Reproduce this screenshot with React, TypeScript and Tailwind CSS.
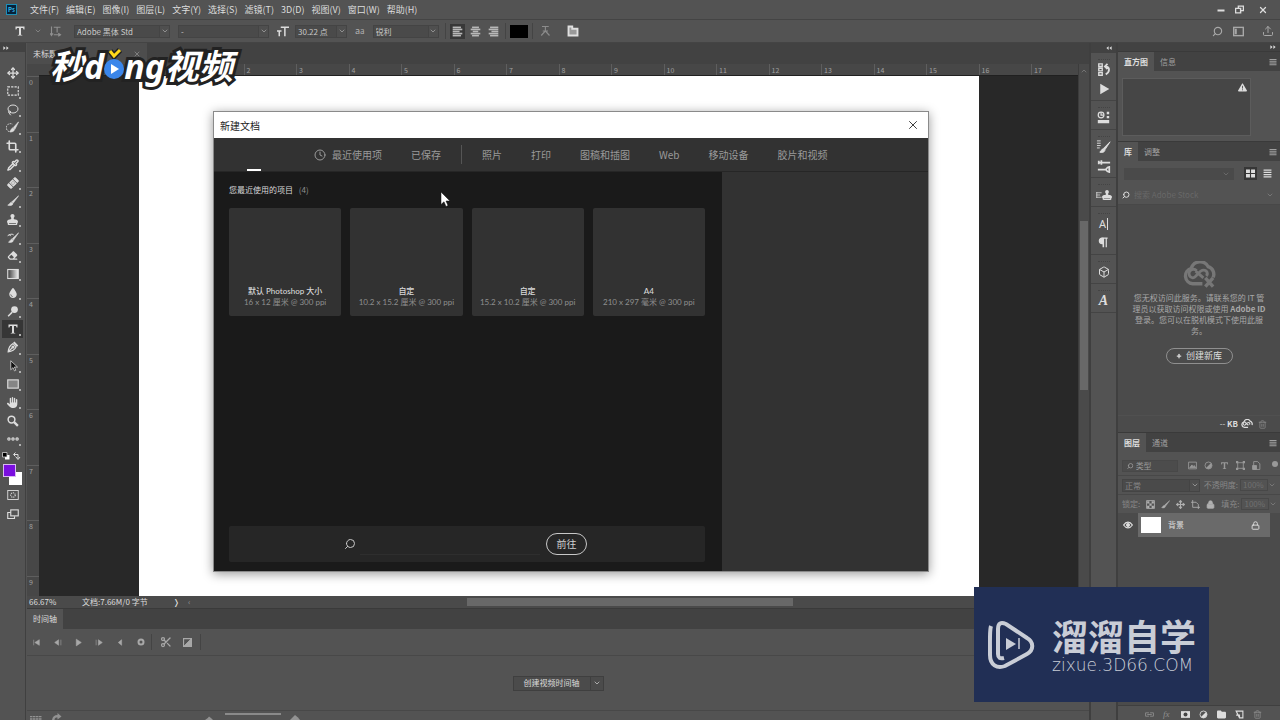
import { type ReactNode } from "react";
import {
  ChevronDown,
  ChevronUp,
  Clock,
  Crop,
  Ellipsis,
  Lasso,
  Lock,
  Move,
  Pipette,
  Plus,
  Scissors,
  Search,
  Box,
  Trash2,
  Upload,
  X,
} from "lucide-react";
import {
  FaBandage,
  FaDroplet,
  FaEraser,
  FaFolder,
  FaHand,
  FaStamp,
  FaTriangleExclamation,
} from "react-icons/fa6";

type IconProps = { className?: string };

function Svg({
  className = "size-3",
  children,
  viewBox = "0 0 16 16",
}: IconProps & { children: ReactNode; viewBox?: string }) {
  return (
    <svg viewBox={viewBox} className={className} fill="none" stroke="currentColor" strokeWidth="1.5" aria-hidden="true">
      {children}
    </svg>
  );
}

const SerifT = ({ className }: IconProps) => (
  <Svg className={className}>
    <path d="M2 2h12v4h-1.200l-.8-2H9.300v9l1.700.4V14H5v-.6L6.700 13V4H4l-.8 2H2z" fill="currentColor" stroke="none" />
  </Svg>
);

const Marquee = ({ className }: IconProps) => (
  <Svg className={className}>
    <rect x="1" y="2.500" width="14" height="11" strokeDasharray="3 1.500" />
  </Svg>
);

const QuickSelect = ({ className }: IconProps) => (
  <Svg className={className}>
    <path d="M7 13a5 5 0 1 1 1-9" strokeDasharray="2 1.200" strokeWidth="1.200" />
    <path d="M15.500 1 9 8l2 2zM8.500 8.500c-2 .3-2 2.500-4 4.500 2.500.8 5.500 0 6-2.500z" fill="currentColor" stroke="currentColor" strokeWidth=".8" />
  </Svg>
);

const Brush = ({ className }: IconProps) => (
  <Svg className={className}>
    <path
      d="M15.500 1 6.500 9l1.800 1.800zM6 9.500c-2.300.2-2.300 2.700-5 4 3 1.300 6.700.5 7-2.200z"
      fill="currentColor"
      strokeWidth=".8"
    />
  </Svg>
);

const HistoryBrush = ({ className }: IconProps) => (
  <Svg className={className}>
    <path
      d="M15.500 1 7 9l1.800 1.800zM6.500 9.500c-2 .2-2 2.500-4.500 4 3 1 6.200.2 6.500-2.200z"
      fill="currentColor"
      strokeWidth=".8"
    />
    <path d="M1 5.500 3 3l2 2.500M3 4c3-2 5-1 6 0" strokeWidth="1.300" />
  </Svg>
);

const Gradient = ({ className }: IconProps) => (
  <Svg className={className}>
    <defs>
      <linearGradient id="toolGradient">
        <stop offset="0" stopColor="#3a3a3a" />
        <stop offset="1" stopColor="#efefef" />
      </linearGradient>
    </defs>
    <rect x="1" y="2" width="14" height="12" fill="url(#toolGradient)" />
  </Svg>
);

const Dodge = ({ className }: IconProps) => (
  <Svg className={className}>
    <circle cx="10" cy="6" r="4.500" fill="currentColor" stroke="none" />
    <path d="M7 9.500 1.500 15" strokeWidth="2" />
  </Svg>
);

const Pen = ({ className }: IconProps) => (
  <Svg className={className}>
    <path d="M1.500 14.500C2 10 3 6 8 3.500l4 4.500c-2 4.500-6 6-10.500 6.500zM2 14l5-5" />
    <circle cx="8" cy="8" r="1.300" fill="currentColor" />
    <path d="m9 1.500 5 5.500" strokeWidth="2.500" />
  </Svg>
);

const PathArrow = ({ className }: IconProps) => (
  <Svg className={className}>
    <path d="M5 1v12l3-2.800 2 4.300 1.800-.9-2-4.200H14z" fill="#111" strokeWidth="1" />
  </Svg>
);

const RectShape = ({ className }: IconProps) => (
  <Svg className={className}>
    <rect x="1" y="2.500" width="14" height="11" fill="#858585" />
  </Svg>
);

const ZoomTool = ({ className }: IconProps) => (
  <Svg className={className}>
    <circle cx="6" cy="6" r="4.500" strokeWidth="2" />
    <path d="m9.500 9.500 5 5" strokeWidth="3" />
  </Svg>
);

const QuickMask = ({ className }: IconProps) => (
  <Svg className={className}>
    <rect x="1" y="2" width="14" height="12" strokeWidth="1.200" />
    <circle cx="8" cy="8" r="3" strokeDasharray="1.500 1" />
  </Svg>
);

const ScreenMode = ({ className }: IconProps) => (
  <Svg className={className}>
    <path d="M5 6H1v8h9v-3" />
    <rect x="5" y="2.500" width="10" height="8" />
  </Svg>
);

const AlignIcon = ({ rows }: { rows: [number, number][] }) => (
  <Svg className="size-[11px] text-[#b8b8b8]">
    {rows.map(([x, w], i) => (
      <path key={i} d={`M${x} ${2 + i * 3}h${w}`} strokeWidth="2.400" />
    ))}
  </Svg>
);

const HalfCircle = ({ className }: IconProps) => (
  <Svg className={className}>
    <circle cx="8" cy="8" r="6.200" />
    <path d="M12.500 3.500a6.400 6.400 0 0 1-9 9z" fill="currentColor" stroke="none" />
  </Svg>
);

const CloudIcon = ({ className, crossed }: IconProps & { crossed?: boolean }) => (
  <Svg className={className} viewBox="0 0 34 27">
    <path d="M20 23H10a8 8 0 0 1-1.500-15.700A9.500 9.500 0 0 1 26 5.500a8 8 0 0 1 5 11" strokeWidth="3.500" />
    <path d="M14 9.500a4.500 4.500 0 1 0-4 7.500c4 0 6-8 11-8 4 0 5 4 3 6M13 10l8 7" strokeWidth="3" />
    {crossed && <path d="m23 17 8 9m0-9-8 9" strokeWidth="3.500" />}
  </Svg>
);

const Burger = () => (
  <Svg className="size-2">
    <path d="M1 3h14M1 6.500h14M1 10h14M1 13.500h14" strokeWidth="2" />
  </Svg>
);

const DoubleArrow = ({ left }: { left?: boolean }) => (
  <Svg className={left ? "size-[6px] rotate-180" : "size-[6px]"}>
    <path d="M1 3v10l6-5zM9 3v10l6-5z" fill="currentColor" stroke="none" />
  </Svg>
);

const menus = ["文件(F)", "编辑(E)", "图像(I)", "图层(L)", "文字(Y)", "选择(S)", "滤镜(T)", "3D(D)", "视图(V)", "窗口(W)", "帮助(H)"];

const tools: { name: string; icon: ReactNode; plain?: boolean; active?: boolean }[] = [
  { name: "移动工具", icon: <Move className="size-3" strokeWidth={2.500} />, plain: true },
  { name: "矩形选框工具", icon: <Marquee className="size-3" /> },
  { name: "套索工具", icon: <Lasso className="size-3" /> },
  { name: "快速选择工具", icon: <QuickSelect className="size-[13px]" /> },
  { name: "裁剪工具", icon: <Crop className="size-[13px]" strokeWidth={3} /> },
  { name: "吸管工具", icon: <Pipette className="size-3" strokeWidth={3} /> },
  { name: "修复画笔工具", icon: <FaBandage className="size-3 -rotate-45" /> },
  { name: "画笔工具", icon: <Brush className="size-3" /> },
  { name: "仿制图章工具", icon: <FaStamp className="size-[11px]" /> },
  { name: "历史记录画笔工具", icon: <HistoryBrush className="size-3" /> },
  { name: "橡皮擦工具", icon: <FaEraser className="size-[11px]" /> },
  { name: "渐变工具", icon: <Gradient className="size-3" /> },
  { name: "模糊工具", icon: <FaDroplet className="size-[10px]" /> },
  { name: "减淡工具", icon: <Dodge className="size-3" /> },
  { name: "文字工具", icon: <SerifT className="size-3" />, active: true },
  { name: "钢笔工具", icon: <Pen className="size-3" /> },
  { name: "路径选择工具", icon: <PathArrow className="size-3" /> },
  { name: "矩形工具", icon: <RectShape className="size-3" /> },
  { name: "抓手工具", icon: <FaHand className="size-[11px]" /> },
  { name: "缩放工具", icon: <ZoomTool className="size-3" />, plain: true },
  { name: "编辑工具栏", icon: <Ellipsis className="size-[14px]" strokeWidth={4} /> },
];

function MenuBar() {
  return (
    <header className="flex h-5 shrink-0 items-center border-b border-[#444444] bg-[#535353]">
      <div className="ml-1.5 flex size-[11px] items-center justify-center border border-[#1c8fb8] bg-[#06223a] text-[6px] font-bold text-[#35b8e8]">
        Ps
      </div>
      <nav className="ml-[13px] flex flex-1 gap-[7px] text-[9px] leading-4">
        {menus.map((menu) => (
          <button key={menu}>{menu}</button>
        ))}
      </nav>
      <div className="flex items-center gap-2.5 pr-3">
        <button aria-label="最小化">
          <Svg className="size-2">
            <path d="M1 9h14" strokeWidth="4" />
          </Svg>
        </button>
        <button aria-label="还原">
          <Svg className="size-[9px]">
            <path d="M6 5V2h9v8h-4M1 6h9v8H1z" strokeWidth="2.500" />
          </Svg>
        </button>
        <button aria-label="关闭" className="ml-1">
          <X className="size-[10px]" strokeWidth={3} />
        </button>
      </div>
    </header>
  );
}

function Select({ label, value, className }: { label: string; value: string; className: string }) {
  return (
    <label className={`relative flex h-[13px] items-center border border-[#444444] bg-[#4a4a4a] ${className}`}>
      <span className="sr-only">{label}</span>
      <select className="h-full w-full appearance-none pl-0.5 text-[8px] leading-[11px] outline-none">
        <option>{value}</option>
      </select>
      <span className="pointer-events-none absolute inset-y-0 right-0 flex w-2.5 items-center justify-center border-l border-[#444444] bg-[#4f4f4f]">
        <ChevronDown className="size-2 text-[#b0b0b0]" />
      </span>
    </label>
  );
}

const Divider = () => <span className="h-4 w-px bg-[#444444]" />;

function OptionsBar() {
  return (
    <div className="flex h-[23px] shrink-0 items-center border-b border-[#444444] bg-[#535353] px-1.5 text-[#c8c8c8]">
      <SerifT className="ml-2 size-3 text-[#e0e0e0]" />
      <ChevronDown className="ml-2 size-2 text-[#999999]" />
      <Svg className="ml-2 size-3 text-[#909090]">
        <path d="M5 3h9M9.500 3v7M2 2v11M0 11l2 3 2-3M5 13h8M11 11l3 2-3 2" />
      </Svg>
      <Select label="字体" value="Adobe 黑体 Std" className="ml-3 w-24" />
      <Select label="字形" value="-" className="ml-2 w-[91px]" />
      <Svg className="ml-2 size-3 text-[#dddddd]">
        <path d="M5 3h11M10.500 3v12M0 8h6M3 8v7" strokeWidth="2" />
      </Svg>
      <Select label="字号" value="30.22 点" className="ml-1.5 w-[52px]" />
      <span className="ml-2 text-[9px] leading-3 text-[#b0b0b0]">
        a<span className="text-[8px]">a</span>
      </span>
      <Select label="消除锯齿" value="锐利" className="ml-2 w-[66px]" />
      <div className="ml-1.5 flex items-center gap-1">
        <Divider />
        <button aria-label="左对齐" className="flex h-[15px] w-[15px] items-center justify-center bg-[#383838]">
          <AlignIcon rows={[[1, 12], [1, 14], [1, 10], [1, 14], [1, 12]]} />
        </button>
        <button aria-label="居中对齐" className="flex w-3.5 justify-center">
          <AlignIcon rows={[[3, 10], [1, 14], [4, 8], [1, 14], [3, 10]]} />
        </button>
        <button aria-label="右对齐" className="flex w-3.5 justify-center">
          <AlignIcon rows={[[3, 12], [1, 14], [5, 10], [1, 14], [3, 12]]} />
        </button>
        <Divider />
        <button aria-label="文本颜色" className="h-[13px] w-[18px] bg-black" />
        <Divider />
      </div>
      <Svg className="ml-1.5 size-3 text-[#8c8c8c]">
        <path d="M4 2h9M8.500 2v6L3 14M8.500 8 14 14M5 8h7" />
      </Svg>
      <span className="mr-2 ml-2">
        <Divider />
      </span>
      <Svg className="size-3 text-[#e0e0e0]">
        <path d="M2 2h5v3h7v9H2z" fill="#999999" strokeWidth="2.500" />
      </Svg>
      <span className="ml-1.5">
        <Divider />
      </span>
      <div className="ml-auto flex items-center gap-2.5 text-[#a8a8a8]">
        <Search className="size-[11px] -scale-x-100" strokeWidth={2.500} />
        <Svg className="size-[11px]">
          <rect x="1" y="2" width="14" height="12" strokeWidth="2" />
          <path d="M4 4v8" strokeWidth="3" />
        </Svg>
        <Upload className="ml-2 size-3" />
      </div>
    </div>
  );
}

function ToolBar() {
  return (
    <aside className="flex w-[26px] shrink-0 flex-col border-r border-[#404040] bg-[#535353]">
      <div className="flex h-[9px] items-center bg-[#424242] pl-[3px]">
        <DoubleArrow />
      </div>
      <div className="mt-3 grid h-[384px] auto-rows-fr pr-0.5 pl-0.5">
        {tools.map((tool) => (
          <button
            key={tool.name}
            aria-label={tool.name}
            className={`relative flex items-center justify-center ${tool.active ? "bg-[#363636]" : ""}`}
          >
            {tool.icon}
            {!tool.plain && <span className="absolute right-0.5 bottom-0.5 size-0.5 bg-[#b0b0b0]" />}
          </button>
        ))}
      </div>
      <div className="mt-1 flex items-center justify-between px-0.5">
        <Svg className="size-2">
          <path d="M6 6h9v9H6z" fill="#fff" stroke="none" />
          <path d="M1 1h9v9H1z" fill="#000" />
        </Svg>
        <Svg className="mr-0.5 size-2">
          <path d="M2 5h8v8M5 1 1 5l4 4M6 10l4 5 4-5" strokeWidth="2" />
        </Svg>
      </div>
      <div className="relative mx-[3px] mt-1 h-[21px]">
        <button aria-label="背景色" className="absolute right-0 bottom-0 size-[13px] bg-white" />
        <button aria-label="前景色" className="absolute top-0 left-0 size-[13px] border border-[#d8b8f0] bg-[#7a0ee0]" />
      </div>
      <div className="mt-1 flex flex-col items-center gap-[7px]">
        <QuickMask className="size-3" />
        <ScreenMode className="size-3" />
      </div>
    </aside>
  );
}

const columnMarks = Array.from({ length: 20 }, (_, i) => i - 2);
const rowMarks = Array.from({ length: 10 }, (_, i) => i);

const presets = [
  { title: "默认 Photoshop 大小", size: "16 x 12 厘米 @ 300 ppi" },
  { title: "自定", size: "10.2 x 15.2 厘米 @ 300 ppi" },
  { title: "自定", size: "15.2 x 10.2 厘米 @ 300 ppi" },
  { title: "A4", size: "210 x 297 毫米 @ 300 ppi" },
];

function NewDocumentDialog() {
  return (
    <div
      role="dialog"
      aria-label="新建文档"
      className="absolute top-[35px] left-[174px] flex h-[461px] w-[716px] flex-col border border-[#8a8a8a] bg-[#1a1a1a] shadow-[0_2px_10px_rgba(0,0,0,0.4)]"
    >
      <div className="flex h-[26px] shrink-0 items-center justify-between bg-white pr-2 pl-1.5 text-[10px] text-[#222222]">
        <span>新建文档</span>
        <button aria-label="关闭">
          <X className="size-3.5" strokeWidth={1.500} />
        </button>
      </div>
      <div className="flex h-[34px] shrink-0 items-stretch border-b border-[#262626] bg-[#323232] text-[10px] text-[#9a9a9a]">
        <span className="ml-[33px] w-3.5 border-b-2 border-white" />
        <div className="ml-[53px] flex items-center gap-[29px]">
          <button className="flex items-center gap-1.5">
            <Clock className="size-3" />
            最近使用项
          </button>
          <button>已保存</button>
        </div>
        <span className="mx-5 my-[7px] w-px bg-[#555555]" />
        <div className="flex items-center gap-[29px]">
          {["照片", "打印", "图稿和插图", "Web", "移动设备", "胶片和视频"].map((tab) => (
            <button key={tab}>{tab}</button>
          ))}
        </div>
      </div>
      <div className="flex min-h-0 flex-1">
        <div className="flex flex-1 flex-col pr-[17px] pb-[9px] pl-[15px]">
          <p className="mt-3 text-[8px] leading-3 text-[#d8d8d8]">
            您最近使用的项目 <span className="ml-1 text-[#909090]">(4)</span>
          </p>
          <div className="mt-3 grid grid-cols-4 gap-[9px]">
            {presets.map((preset) => (
              <button
                key={preset.size}
                className="flex h-[108px] flex-col items-center justify-end rounded-xs bg-[#323232] pb-2 font-['Lato','Noto_Sans_CJK_SC',sans-serif] whitespace-nowrap"
              >
                <span className="text-[8px] leading-[11px] font-medium text-[#d8d8d8]">{preset.title}</span>
                <span className="text-[8px] leading-[11px] text-[#8f8f8f]">{preset.size}</span>
              </button>
            ))}
          </div>
          <div className="mt-auto flex h-9 items-center rounded-xs bg-[#262626]">
            <Search className="ml-[115px] size-3 -scale-x-100 text-[#c8c8c8]" />
            <input aria-label="搜索模板" className="ml-1 h-[22px] w-[180px] border-b border-[#2e2e2e] text-[10px] outline-none" />
            <button className="ml-1.5 h-[22px] w-[41px] rounded-full border border-[#c8c8c8] text-[10px] leading-5 text-[#d0d0d0]">
              前往
            </button>
          </div>
        </div>
        <div className="w-[206px] bg-[#323232]" />
      </div>
      <Svg className="absolute top-20 left-[226px] h-[15px] w-[10px]" viewBox="0 0 10 15">
        <path d="M1 0v12.500l3-2.700 2 4.700 2-1-2-4.500h4z" fill="#fff" stroke="#111" strokeWidth=".5" />
      </Svg>
    </div>
  );
}

function Ruler() {
  return (
    <div className="flex h-3 shrink-0 justify-center overflow-hidden border-b border-[#202020] bg-[#474747]">
      <div className="grid w-[1050px] shrink-0 grid-cols-20">
        {columnMarks.map((mark) => (
          <span key={mark} className="flex items-end border-l border-[#5e5e5e] pl-0.5 text-[7px] leading-[10px] text-[#a0a0a0]">
            {mark > 1 && mark}
          </span>
        ))}
      </div>
    </div>
  );
}

function Workspace() {
  return (
    <section className="flex min-h-0 flex-1 flex-col">
      <div className="flex h-[21px] shrink-0 bg-[#424242] text-[8px]">
        <div className="flex w-[120px] items-center justify-between bg-[#4d4d4d] px-1.5">
          <span>未标题</span>
          <X className="size-2 text-[#999999]" />
        </div>
      </div>
      <div className="flex min-h-0 flex-1">
        <div className="flex w-3 shrink-0 flex-col overflow-hidden bg-[#474747]">
          <div className="h-3 shrink-0" />
          <div className="grid h-[555px] shrink-0 grid-rows-10">
            {rowMarks.map((mark) => (
              <span key={mark} className="border-t border-[#5e5e5e] pl-0.5 text-[7px] leading-[10px] text-[#a0a0a0]">
                {mark}
              </span>
            ))}
          </div>
        </div>
        <div className="flex min-w-0 flex-1 flex-col">
          <Ruler />
          <div className="relative flex min-h-0 flex-1 justify-center bg-[#282828]">
            <div className="w-[840px] shrink-0 bg-white" />
            <NewDocumentDialog />
          </div>
        </div>
        <div className="flex w-[11px] shrink-0 flex-col items-center border-l border-[#3c3c3c] bg-[#4a4a4a]">
          <ChevronUp className="mt-[3px] size-2 text-[#888888]" />
          <div className="mt-[146px] h-[169px] w-2 bg-[#686868]" />
        </div>
      </div>
      <div className="flex h-3 shrink-0 items-center bg-[#4a4a4a] text-[8px] leading-3">
        <span className="w-[55px] pl-0.5">66.67%</span>
        <span className="w-[91px]">文档:7.66M/0 字节</span>
        <span>❭</span>
        <span className="ml-2 text-[#999999]">‹</span>
        <div className="flex flex-1 justify-center pr-5">
          <div className="h-2 w-[326px] bg-[#686868]" />
        </div>
      </div>
    </section>
  );
}

function Tabs({ items }: { items: string[] }) {
  return (
    <div className="flex h-5 shrink-0 items-stretch border-t border-[#3a3a3a] bg-[#424242] text-[8px]">
      {items.map((item, i) => (
        <button key={item} className={i === 0 ? "bg-[#535353] px-1.5 font-bold" : "px-1.5 text-[#a0a0a0]"}>
          {item}
        </button>
      ))}
      <button aria-label="面板菜单" className="mr-[3px] ml-auto text-[#a0a0a0]">
        <Burger />
      </button>
    </div>
  );
}

function Timeline() {
  const controls: [string, string][] = [
    ["转到第一帧", "M3 3v10M13 3v10L5 8z"],
    ["上一帧", "M10 3v10L3 8zM14 3v10"],
    ["播放", "M4 2v12l9-6z"],
    ["下一帧", "M2 3v10M6 3v10l7-5z"],
    ["静音", "M10 3v10L4 8z"],
  ];
  return (
    <section className="flex h-28 shrink-0 flex-col border-t border-[#3a3a3a] bg-[#535353]">
      <div className="flex h-5 shrink-0 bg-[#424242] text-[8px]">
        <button className="bg-[#535353] px-1.5">时间轴</button>
      </div>
      <div className="flex h-[27px] shrink-0 items-center border-b border-[#484848] pl-[5px] text-[#a8a8a8]">
        <div className="flex gap-3">
          {controls.map(([name, d]) => (
            <button key={name} aria-label={name}>
              <Svg className="size-[9px]">
                <path d={d} fill="currentColor" strokeWidth="1" />
              </Svg>
            </button>
          ))}
        </div>
        <Svg className="mr-1.5 ml-3 size-2">
          <circle cx="8" cy="8" r="5" strokeWidth="4" />
        </Svg>
        <Divider />
        <Scissors className="ml-2 size-3" strokeWidth={2.500} />
        <Svg className="mr-2 ml-[11px] size-[9px]">
          <path d="M1 1h14v14H1z" strokeWidth="2" />
          <path d="M15 1v14H1z" fill="currentColor" />
        </Svg>
        <Divider />
      </div>
      <div className="flex min-h-0 flex-1 items-center justify-center">
        <div className="flex h-[15px] items-stretch border border-[#3f3f3f] bg-[#4b4b4b] text-[8px] leading-3">
          <button className="w-[77px] border-r border-[#3f3f3f]">创建视频时间轴</button>
          <button aria-label="时间轴类型" className="flex w-3 items-center justify-center">
            <ChevronDown className="size-2" />
          </button>
        </div>
      </div>
      <div className="flex h-2.5 shrink-0 items-end overflow-hidden border-t border-[#484848] text-[#929292]">
        <Svg className="ml-[3px] h-1 w-3" viewBox="0 0 24 8">
          <path d="M0 1h24M0 6h24" strokeWidth="3" strokeDasharray="5 1" />
        </Svg>
        <Svg className="ml-2.5 h-[7px] w-2.5" viewBox="0 0 20 14">
          <path d="M0 14C1 7 5 4 11 4V0l8 7-8 6V9C7 9 5 10 5 14z" fill="currentColor" stroke="none" />
        </Svg>
        <Svg className="ml-[143px] h-1 w-2" viewBox="0 0 20 10">
          <path d="m0 10 7-5 3-4 5 4 5 5z" fill="currentColor" stroke="none" />
        </Svg>
        <span className="mb-[5px] ml-3 h-0.5 w-14 bg-[#8a8a8a]" />
        <Svg className="ml-2 h-[5px] w-3" viewBox="0 0 20 10">
          <path d="m0 10 5-5 5-5 6 5 4 5z" fill="currentColor" stroke="none" />
        </Svg>
      </div>
    </section>
  );
}

const dockGroups: ReactNode[][] = [
  [
    <Svg className="size-[14px]">
      <path d="M2 1h4v3H2zM2 6h4v3H2zM2 11h4v3H2z" />
      <path d="M10 4c5 0 5 6 0 9M12 1 9 4l3 3" strokeWidth="2" />
    </Svg>,
    <Svg className="size-3">
      <path d="M3 1v14l12-7z" fill="currentColor" stroke="none" />
    </Svg>,
  ],
  [
    <Svg className="size-[13px]">
      <circle cx="5" cy="5" r="3.500" />
      <path d="M5 2v3h3" />
      <path d="M12 1h3v3h-3zM12 6h3v3h-3zM1 11h14v4H1z" fill="currentColor" stroke="none" />
    </Svg>,
  ],
  [
    <Svg className="size-[15px]">
      <path d="M15 3 8 10l1.500 1.500zM8 10.500c-2 0-2 2-4 3.500 2 .8 5 .5 5.500-2z" fill="currentColor" strokeWidth="1" />
      <path d="M1 2h4M1 4.500h4M1 7h4M1 9.500h3" strokeWidth="1" />
    </Svg>,
    <Svg className="size-[14px]">
      <path d="M6 4h9M1 4h5M1 12h9M2 2v4M5 1.500v5M10 12c2-3 4-3 4-3v6s-2 0-4-3" strokeWidth="2" />
    </Svg>,
  ],
  [
    <span className="flex items-center">
      <Svg className="size-[6px]">
        <path d="M1 2h14M1 8h10M1 14h14M2 0v16" strokeWidth="2" />
      </Svg>
      <FaStamp className="size-2.5" />
    </span>,
  ],
  [
    <span className="border-r border-[#dddddd] pr-px font-['Noto_Sans',sans-serif] text-[11px] leading-3">A</span>,
    <Svg className="size-[11px]">
      <path d="M9 1.500H6a4 4 0 0 0 0 8h1.500V15M8 2v13M12 2v13M6 1.500h8" fill="none" strokeWidth="1.800" />
      <path d="M8 1H6a4 4 0 0 0 0 8h2z" fill="currentColor" stroke="none" />
    </Svg>,
  ],
  [<Box className="size-3" />],
  [<span className="font-['Liberation_Serif',serif] text-[14px] leading-3 font-bold italic">A</span>],
];

function IconDock() {
  return (
    <aside className="flex w-[29px] shrink-0 flex-col border-x-2 border-[#3f3f3f] bg-[#535353]">
      <div className="flex h-2.5 shrink-0 items-center justify-end bg-[#424242] pr-1">
        <DoubleArrow left />
      </div>
      {dockGroups.map((icons, i) => (
        <div key={i} className="border-b border-[#444444] pb-0.5">
          <div className="mx-auto h-[7px] w-3 border-b border-dotted border-[#444444]" />
          {icons.map((icon, j) => (
            <button key={j} className="flex h-[19px] w-full items-center justify-center">
              {icon}
            </button>
          ))}
        </div>
      ))}
    </aside>
  );
}

function LibraryPanel() {
  return (
    <section className="flex h-[291px] shrink-0 flex-col">
      <Tabs items={["库", "调整"]} />
      <div className="flex h-[25px] items-center gap-1.5 pr-2 pl-1.5">
        <label className="relative flex flex-1 items-center">
          <span className="sr-only">库列表</span>
          <select className="h-3 w-full appearance-none bg-[#4a4a4a]" />
          <ChevronDown className="pointer-events-none absolute right-1 size-2 text-[#777777]" />
        </label>
        <button aria-label="网格视图" className="ml-1 flex size-[13px] items-center justify-center bg-[#363636]">
          <Svg className="size-[9px]">
            <path d="M0 1h7v6H0zM9 1h7v6H9zM0 9h7v6H0zM9 9h7v6H9z" fill="currentColor" stroke="none" />
          </Svg>
        </button>
        <button aria-label="列表视图">
          <Svg className="size-[9px]">
            <path d="M1 2h14M1 6h14M1 10h14M1 14h14" strokeWidth="2.500" />
          </Svg>
        </button>
      </div>
      <label className="flex h-[19px] items-center border-b border-[#484848] pr-1.5 pl-1">
        <Search className="size-2 -scale-x-100" strokeWidth={3} />
        <span className="sr-only">搜索</span>
        <input
          placeholder="搜索 Adobe Stock"
          className="ml-1 min-w-0 flex-1 text-[8px] outline-none placeholder:text-[#686868]"
        />
        <ChevronDown className="size-2 text-[#888888]" />
      </label>
      <div className="flex flex-1 flex-col items-center bg-[#4b4b4b] px-3.5 pt-14 text-center">
        <CloudIcon className="h-[27px] w-[33px] text-[#777777]" crossed />
        <p className="mt-1 text-[8px] leading-[11px] text-[#a8a8a8]">
          您无权访问此服务。请联系您的 IT 管理员以获取访问权限或使用 <b>Adobe ID</b> 登录。您可以在脱机模式下使用此服务。
        </p>
        <button className="mt-3 flex h-4 w-[67px] items-center justify-center gap-1 rounded-full border border-[#8f8f8f] text-[9px] leading-3">
          <Plus className="size-1.5" strokeWidth={5} />
          创建新库
        </button>
      </div>
      <div className="flex h-[17px] items-center justify-end gap-[3px] border-t border-[#505050] bg-[#4b4b4b] pr-[13px] text-[8px]">
        <span>
          -- <b>KB</b>
        </span>
        <CloudIcon className="h-2.5 w-3" />
        <Trash2 className="ml-0.5 size-[9px] text-[#888888]" />
      </div>
    </section>
  );
}

function LayersPanel() {
  return (
    <section className="flex min-h-0 flex-1 flex-col text-[8px]">
      <Tabs items={["图层", "通道"]} />
      <div className="flex h-6 items-center border-b border-[#484848] px-1 pt-1 text-[#999999]">
        <label className="flex h-3 w-14 items-center border border-[#484848] bg-[#4c4c4c] pl-1">
          <Search className="size-2 -scale-x-100" strokeWidth={3} />
          <span className="sr-only">筛选图层</span>
          <select className="ml-0.5 h-full w-full appearance-none leading-[10px]">
            <option>类型</option>
          </select>
        </label>
        <div className="ml-auto flex items-center gap-[7px]">
          <Svg className="size-[9px]">
            <path d="M1 2h14v12H1z" />
            <path d="m3 12 4-5 2 3 2-2 3 4z" fill="currentColor" />
          </Svg>
          <HalfCircle className="size-[9px]" />
          <SerifT className="size-[9px]" />
          <Svg className="size-[9px]">
            <path d="M3 3h10v10H3z" />
            <path d="M0 0h4v4H0zM12 0h4v4h-4zM0 12h4v4H0zM12 12h4v4h-4z" fill="currentColor" stroke="none" />
          </Svg>
          <Svg className="size-[9px]">
            <path d="M3 15V1h7l4 4v10z" />
            <path d="M1 8h7v7H1z" fill="currentColor" />
          </Svg>
          <span className="-mr-0.5 mb-1 ml-1 size-1.5 rounded-full bg-[#999999]" />
        </div>
      </div>
      <div className="flex h-[18px] items-center px-1 text-[#888888]">
        <Select label="混合模式" value="正常" className="w-[78px]" />
        <label htmlFor="opacity" className="ml-auto whitespace-nowrap">
          不透明度:
        </label>
        <input id="opacity" defaultValue="100%" className="ml-0.5 h-3 w-7 border border-[#484848] px-0.5 text-[#707070]" />
        <ChevronDown className="size-2" />
      </div>
      <div className="flex h-[19px] items-center gap-1.5 border-t border-[#484848] px-1 text-[#888888]">
        <span className="whitespace-nowrap">锁定:</span>
        <Svg className="size-[9px] shrink-0 text-[#b0b0b0]">
          <path d="M1 1h14v14H1z" />
          <path d="M2 2h4v4H2zM10 2h4v4h-4zM6 6h4v4H6zM2 10h4v4H2zM10 10h4v4h-4z" fill="currentColor" stroke="none" />
        </Svg>
        <Brush className="size-[9px] shrink-0 text-[#b0b0b0]" />
        <Move className="size-[9px] shrink-0 text-[#b0b0b0]" strokeWidth={3} />
        <Svg className="size-[9px] shrink-0 text-[#b0b0b0]">
          <path d="M3 0v13h13M0 4h9l4 4v8" />
        </Svg>
        <Lock className="size-[9px] shrink-0 text-[#b0b0b0]" fill="currentColor" />
        <div className="ml-auto flex items-center">
          <label htmlFor="fill" className="whitespace-nowrap">
            填充:
          </label>
          <input id="fill" defaultValue="100%" className="ml-0.5 h-3 w-7 border border-[#484848] px-0.5 text-[#707070]" />
          <ChevronDown className="size-2" />
        </div>
      </div>
      <div className="flex min-h-0 flex-1 flex-col bg-[#4b4b4b]">
        <div className="flex h-6 items-center pr-2.5">
          <Svg className="mx-[5px] size-2.5">
            <path d="M1 8c4-6 10-6 14 0-4 6-10 6-14 0z" strokeWidth="2" />
            <circle cx="8" cy="8" r="2.500" fill="currentColor" />
          </Svg>
          <button className="flex h-full flex-1 items-center bg-[#6a6a6a] pr-2.5 pl-[3px]">
            <span className="h-4 w-5 bg-white" />
            <span className="ml-[7px]">背景</span>
            <Lock className="ml-auto size-[9px]" strokeWidth={2.500} />
          </button>
        </div>
      </div>
      <div className="flex h-[15px] shrink-0 items-center gap-[9px] border-t border-[#3f3f3f] pt-0.5 pl-[27px] text-[#dddddd]">
        <Svg className="size-[9px] text-[#909090]">
          <path d="M7 5H1v6h6M9 5h6v6H9M4 8h8" />
        </Svg>
        <i className="w-[9px] font-['Liberation_Serif',serif] text-[9px] leading-[9px] text-[#909090]">fx</i>
        <Svg className="size-[9px]">
          <path d="M0 2h16v12H0z" fill="currentColor" stroke="none" />
          <circle cx="8" cy="8" r="3.500" fill="#444" stroke="none" />
        </Svg>
        <HalfCircle className="size-[9px]" />
        <FaFolder className="size-[9px]" />
        <Svg className="size-[9px]">
          <path d="M2 2h12v12H8zM2 9h6v5" strokeWidth="2" />
        </Svg>
        <Trash2 className="size-[9px] text-[#909090]" />
      </div>
    </section>
  );
}

function Panels() {
  return (
    <aside className="flex w-[162px] shrink-0 flex-col bg-[#535353]">
      <div className="flex h-2 shrink-0 items-center justify-end bg-[#424242] pr-1">
        <DoubleArrow />
      </div>
      <section className="flex h-[90px] shrink-0 flex-col">
        <Tabs items={["直方图", "信息"]} />
        <div className="mt-[7px] mr-[29px] ml-1 flex h-[58px] justify-end border border-[#5c5c5c] bg-[#464646] p-[3px] pt-1">
          <FaTriangleExclamation className="size-[9px]" />
        </div>
      </section>
      <LibraryPanel />
      <LayersPanel />
    </aside>
  );
}

function VideoBrand() {
  return (
    <div className="absolute top-[46px] left-[50px] flex h-10 items-center font-['Noto_Sans','Noto_Sans_CJK_SC',sans-serif] text-[34px] leading-10 font-bold text-white italic [paint-order:stroke] [-webkit-text-stroke:6px_#222]">
      <span>秒</span>
      <span>d</span>
      <Svg className="z-10 mb-1 h-9 w-5" viewBox="0 0 20 36">
        <path d="m6 5 4 5 6-6" stroke="#222" strokeWidth="6" />
        <path d="m6 5 4 5 6-6" stroke="#ffd91a" strokeWidth="3" />
        <circle cx="10" cy="23" r="10" fill="#3b86ea" stroke="none" />
        <path d="M7 18v10l8-5z" fill="#fff" stroke="none" />
      </Svg>
      <span>ng</span>
      <span>视频</span>
    </div>
  );
}

function CourseBadge() {
  return (
    <div className="absolute right-[71px] bottom-[18px] flex h-[115px] w-[235px] items-center bg-[#212f55] pl-3.5 text-[#c9cdd6]">
      <Svg className="h-[50px] w-12" viewBox="0 0 48 50">
        <path d="M3 6C1.500 10 2 18 2 35c0 10 7 14 15 11l22-12c7-4 7-12 0-16L18 4c-5-2-8-1-8 5v25c0 4 2 5 6 4" strokeWidth="4" />
        <path d="M18 18v12l10-6z" fill="currentColor" stroke="none" />
        <path d="M31 18v11" />
      </Svg>
      <div className="ml-4">
        <p className="font-['Noto_Sans','Noto_Sans_CJK_SC',sans-serif] text-[36px] leading-10 font-bold">溜溜自学</p>
        <p className="font-['DejaVu_Sans',sans-serif] text-[17px] leading-3.5 font-extralight">zixue.3D66.COM</p>
      </div>
    </div>
  );
}

export default function App() {
  return (
    <div className="relative flex h-screen flex-col overflow-hidden bg-[#535353] font-['Noto_Sans_CJK_SC',sans-serif] text-[#dddddd]">
      <MenuBar />
      <OptionsBar />
      <main className="flex min-h-0 flex-1">
        <ToolBar />
        <div className="flex min-w-0 flex-1 flex-col pl-px">
          <Workspace />
          <Timeline />
        </div>
        <IconDock />
        <Panels />
      </main>
      <VideoBrand />
      <CourseBadge />
    </div>
  );
}
